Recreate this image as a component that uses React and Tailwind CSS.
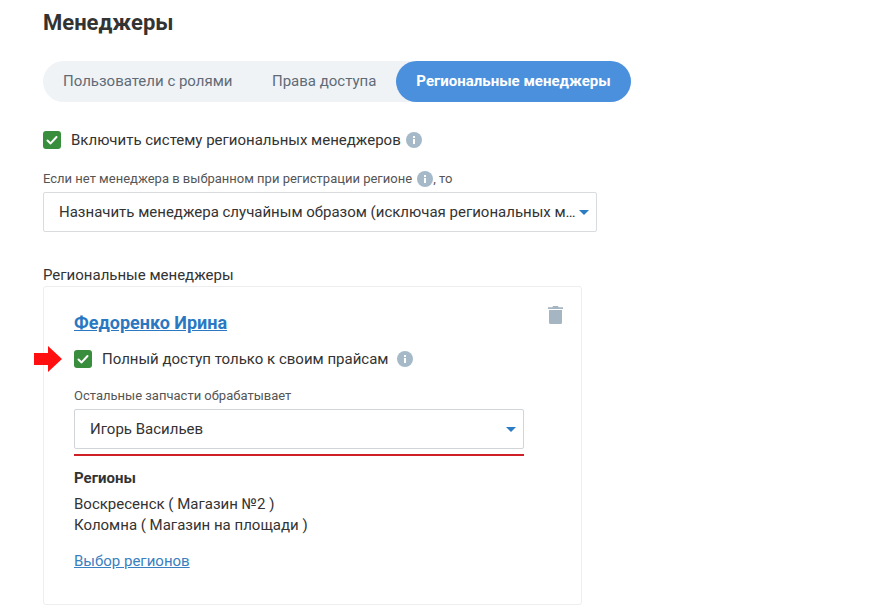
import React from 'react';

const Check = () => (
  <span className="flex h-[18px] w-[18px] shrink-0 items-center justify-center rounded-[3px] bg-[#388e3c]">
    <svg width="14" height="14" viewBox="0 0 14 14" fill="none">
      <path d="M2.5 7.5 L5.6 10.4 L11.5 4" stroke="#fff" strokeWidth="2" strokeLinecap="round" strokeLinejoin="round" />
    </svg>
  </span>
);

const Info = () => (
  <svg width="16" height="16" viewBox="0 0 16 16" className="shrink-0">
    <circle cx="8" cy="8" r="8" fill="#a5b9c9" />
    <rect x="7" y="7" width="2" height="5" fill="#fff" />
    <rect x="7" y="4" width="2" height="2" fill="#fff" />
  </svg>
);

const Caret = () => (
  <svg width="10" height="5" viewBox="0 0 10 5" className="shrink-0">
    <path d="M0 0 H10 L5 5 Z" fill="#2c7cc4" />
  </svg>
);

const Trash = () => (
  <svg width="15" height="18" viewBox="0 0 15 18">
    <path d="M5 0 H10 L10.6 1.2 H15 V3 H0 V1.2 H4.4 Z" fill="#a5b5c1" />
    <path d="M1 4 H14 V16.5 Q14 18 12.5 18 H2.5 Q1 18 1 16.5 Z" fill="#a5b5c1" />
  </svg>
);

const RedArrow = () => (
  <svg width="28" height="26" viewBox="0 0 28 26">
    <path d="M0 7 H14 V0 L28 13 L14 26 V19 H0 Z" fill="#ff0f0f" />
  </svg>
);

export default function App() {
  return (
    <div className="h-[612px] w-[880px] overflow-hidden bg-white pl-[43px] pt-[10px] font-['Roboto',sans-serif] text-[#333]">
      <h1 className="text-[22px] font-bold leading-[26px] text-[#333]">Менеджеры</h1>

      <div className="mt-[25px] flex h-[41px] w-[588px] items-center rounded-full bg-[#f0f3f6] text-[15px]">
        <span className="pl-[20px] text-[#5f6b76]">Пользователи с ролями</span>
        <span className="pl-[39.5px] text-[#5f6b76]">Права доступа</span>
        <span className="ml-auto flex h-[41px] w-[235px] items-center justify-center rounded-full bg-[#4a90dc] text-[15px] font-bold text-white">
          Региональные менеджеры
        </span>
      </div>

      <div className="mt-[29px] flex h-[18px] items-center">
        <Check />
        <span className="ml-[10px] text-[15px] text-[#333]">Включить систему региональных менеджеров</span>
        <span className="ml-[5px]"><Info /></span>
      </div>

      <div className="mt-[21px] flex h-[18px] items-center text-[13px] text-[#555]">
        Если нет менеджера в выбранном при регистрации регионе
        <span className="ml-[5px]"><Info /></span>, то
      </div>

      <div className="mt-[4px] flex h-[40px] w-[554px] items-center rounded-[2px] border border-[#d9dcdf] pl-[15px] pr-[7px]">
        <span className="flex-1 whitespace-nowrap text-[15px] text-[#333]">Назначить менеджера случайным образом (исключая региональных м…</span>
        <Caret />
      </div>

      <div className="mt-[34px] text-[15px] leading-[18px] text-[#333]">Региональные менеджеры</div>

      <div className="relative mt-[2px] h-[319px] w-[539px] rounded-[3px] border border-[#eceeef] pl-[30px] pt-[25px]">
        <span className="absolute right-[18px] top-[19px]"><Trash /></span>

        <a href="#" className="block text-[18px] font-bold leading-[22px] text-[#2b78c2] underline">Федоренко Ирина</a>

        <div className="relative mt-[16px] flex h-[18px] items-center">
          <span className="absolute left-[-40px] top-[-4px]"><RedArrow /></span>
          <Check />
          <span className="ml-[10px] text-[15px] text-[#333]">Полный доступ только к своим прайсам</span>
          <span className="ml-[9px]"><Info /></span>
        </div>

        <div className="mt-[20px] text-[13px] leading-[16px] text-[#555]">Остальные запчасти обрабатывает</div>

        <div className="mt-[5px] flex h-[40px] w-[450px] items-center rounded-[2px] border border-[#d2d5d8] pl-[15px] pr-[7px]">
          <span className="flex-1 text-[15px] text-[#333]">Игорь Васильев</span>
          <Caret />
        </div>
        <div className="mt-[5px] h-[2px] w-[450px] bg-[#cf2027]" />

        <div className="mt-[13px] text-[15px] font-bold leading-[18px] text-[#333]">Регионы</div>
        <div className="mt-[7px] text-[15px] leading-[21px] text-[#333]">
          <div>Воскресенск ( Магазин №2 )</div>
          <div>Коломна ( Магазин на площади )</div>
        </div>
        <a href="#" className="mt-[16px] block text-[15px] leading-[18px] text-[#3a80c0] underline">Выбор регионов</a>
      </div>
    </div>
  );
}
